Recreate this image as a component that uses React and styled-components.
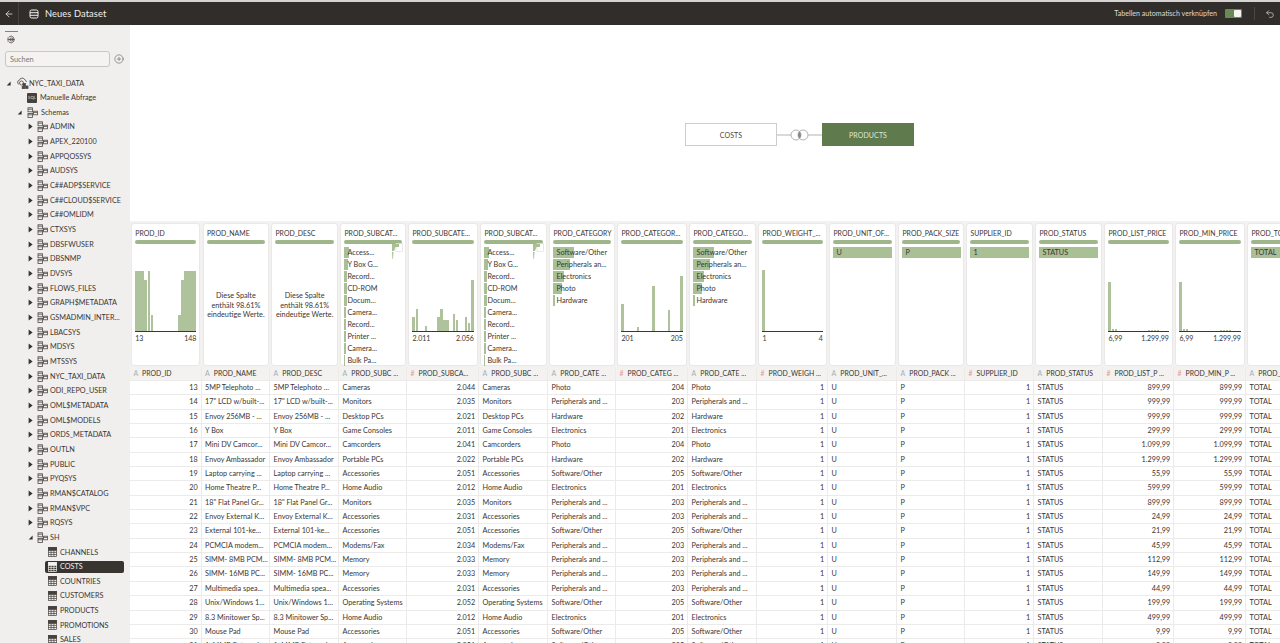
import React from 'react'
import styled, { createGlobalStyle } from 'styled-components'
import { ArrowLeft, CirclePlus, Undo2 } from 'lucide-react'

const COLS = '71.7px 68.5px 69px 68px 72px 69px 68px 72px 69px 71px 69px 68px 69px 69px 71px 72px 70px'
const FONT = `Lato, "Noto Sans", sans-serif`

const GlobalStyle = createGlobalStyle`
  html, body { margin: 0; padding: 0; height: 100%; background: #fff; }
  body { font-family: ${FONT}; color: #35322f; overflow: hidden; }
  * { box-sizing: border-box; }
`

const Page = styled.div`
  width: 1280px;
  height: 643px;
  display: flex;
  flex-direction: column;
  overflow: hidden;
`

const TopBar = styled.header`
  height: 25px;
  flex: none;
  background: #312d2a;
  border-top: 2px solid #d6d4d2;
  display: flex;
  align-items: center;
  color: #f2f0ee;
`

const BackButton = styled.div`
  width: 19px;
  height: 100%;
  display: flex;
  align-items: center;
  justify-content: center;
  border-right: 1px solid #45413d;
`

const Title = styled.div`
  display: flex;
  align-items: center;
  gap: 6px;
  margin-left: 10px;
  font-size: 9.3px;
  letter-spacing: .1px;
`

const TopRight = styled.div`
  margin-left: auto;
  display: flex;
  align-items: center;
  font-size: 7.1px;
  color: #dedbd8;
`

const Toggle = styled.div`
  width: 17px;
  height: 9px;
  margin-left: 8px;
  background: #6a8a55;
  border-radius: 1px;
  display: flex;
  justify-content: flex-end;
  padding: 1px;
  &::after {
    content: '';
    width: 7px;
    background: #f4f6ef;
    border-radius: 1px;
  }
`

const UndoButton = styled.div`
  width: 26px;
  margin-left: 12px;
  height: 13px;
  border-left: 1px solid #4b4743;
  display: flex;
  align-items: center;
  justify-content: flex-end;
  padding-right: 5px;
`

const Body = styled.div`
  flex: 1;
  min-height: 0;
  display: flex;
`

const Sidebar = styled.aside`
  width: 130px;
  flex: none;
  background: #f1efed;
  overflow: hidden;
  padding: 6px 0 0 5px;
`

const SideTab = styled.div`
  width: 13px;
  height: 16px;
  border-top: 1px solid #7d8a70;
  display: flex;
  align-items: center;
  justify-content: center;
  color: #45413d;
`

const SearchRow = styled.div`
  display: flex;
  align-items: center;
  gap: 4px;
  margin-top: 4px;
  color: #45413d;
`

const SearchBox = styled.div`
  width: 105px;
  height: 16px;
  border: 1px solid #c9c7c4;
  border-radius: 3px;
  background: #f4f3f1;
  font-size: 7.4px;
  color: #7b7773;
  padding-left: 4px;
  display: flex;
  align-items: center;
`

const Tree = styled.ul`
  list-style: none;
  margin: 8.7px 0 0 -5px;
  padding: 0;
`

const TreeRow = styled.li`
  height: 14.67px;
  display: flex;
  align-items: center;
  padding-left: ${p => p.$left}px;
  font-size: 7.25px;
  color: #3a3633;
  white-space: nowrap;
`

const Caret = styled.span`
  width: ${p => p.$wide}px;
  flex: none;
  display: flex;
`

const TreeLabel = styled.span`
  margin-left: ${p => p.$gap}px;
`

const SqlBadge = styled.span`
  width: 10px;
  height: 10px;
  flex: none;
  background: #45413d;
  color: #e2e0dd;
  border-radius: 1px;
  font-size: 4.2px;
  line-height: 10px;
  text-align: center;
`

const Selected = styled.div`
  width: 79px;
  height: 12px;
  margin-left: -3px;
  padding-left: 3px;
  display: flex;
  align-items: center;
  border-radius: 2px;
  background: ${p => (p.$on ? '#38342f' : 'transparent')};
  color: ${p => (p.$on ? '#f4f2f0' : '#3a3633')};
`

const Main = styled.main`
  flex: 1;
  min-width: 0;
  overflow: hidden;
  display: flex;
  flex-direction: column;
`

const JoinArea = styled.section`
  height: 196px;
  flex: none;
  padding: 98px 0 0 555px;
  display: flex;
  align-items: flex-start;
`

const JoinBox = styled.div`
  width: 92px;
  height: 23px;
  display: flex;
  align-items: center;
  justify-content: center;
  font-size: 7px;
  letter-spacing: .1px;
  border: 1px solid ${p => (p.$active ? '#5f7a4d' : '#cfcdca')};
  background: ${p => (p.$active ? '#5f7a4d' : '#fff')};
  color: ${p => (p.$active ? '#dfe6d8' : '#4b4743')};
`

const JoinLink = styled.div`
  width: 45px;
  height: 23px;
  display: flex;
  align-items: center;
`

const ProfileGrid = styled.section`
  display: grid;
  grid-template-columns: ${COLS};
  width: 1150px;
  height: 146px;
  flex: none;
  padding-top: 3px;
  background: #f3f2f0;
`

const Card = styled.div`
  height: 141px;
  margin: 0 2.3px;
  padding: 0 3px;
  background: #fff;
  border-radius: 2px;
  box-shadow: 0 0 2px rgba(0, 0, 0, .14);
  display: flex;
  flex-direction: column;
  position: relative;
  min-width: 0;
`

const CardTitle = styled.div`
  font-size: 6.9px;
  margin-top: 5px;
  height: 9px;
  line-height: 9px;
  white-space: nowrap;
  color: #3a3633;
`

const Pill = styled.div`
  height: 4px;
  margin-top: 2px;
  border-radius: 2px;
  background: #9eb68a;
  flex: none;
`

const Note = styled.div`
  margin-top: 47px;
  font-size: 7.3px;
  line-height: 9.6px;
  text-align: center;
  color: #3a3633;
`

const Chart = styled.div`
  height: 88px;
  display: flex;
  align-items: flex-end;
  border-bottom: 1px solid #3a3633;
  flex: none;
`

const Bin = styled.div`
  flex: 1;
  background: #aec39b;
  margin-right: .5px;
`

const AxisLabels = styled.div`
  display: flex;
  justify-content: space-between;
  font-size: 7px;
  margin-top: 2px;
  color: #3a3633;
`

const List = styled.div`
  margin-top: 3px;
  display: flex;
  flex-direction: column;
  gap: 1px;
`

const ListItem = styled.div`
  height: 11px;
  line-height: 11.6px;
  font-size: 7.25px;
  padding-left: 3px;
  white-space: nowrap;
  position: relative;
  color: #3a3633;
`

const ListBar = styled.span`
  position: absolute;
  left: 0;
  top: 0;
  bottom: 0;
  background: #a9c095;
`

const ListText = styled.span`
  position: relative;
`

const Minimap = styled.svg`
  position: absolute;
  right: 2px;
  top: 19px;
`

const DataTable = styled.section`
  width: 1150px;
`

const Row = styled.div`
  display: grid;
  grid-template-columns: ${COLS};
  height: ${p => (p.$head ? '14px' : '14.35px')};
  background: ${p => (p.$head ? '#f3f2f0' : '#fff')};
  border-bottom: 1px solid #ecebe9;
`

const Cell = styled.div`
  font-size: ${p => (p.$head ? '6.9px' : '7.25px')};
  line-height: 13.4px;
  padding: 0 ${p => (p.$num ? '3px' : '0')} 0 3.4px;
  text-align: ${p => (p.$num ? 'right' : 'left')};
  white-space: nowrap;
  overflow: hidden;
  border-right: 1px solid #ecebe9;
  color: #3a3633;
`

const TypeMark = styled.span`
  color: ${p => (p.$num ? '#dc9a8e' : '#9eb0bb')};
  margin-right: 4px;
`

const DbIcon = () => (
  <svg width="10" height="10" viewBox="0 0 10 10" fill="none" stroke="#f2f0ee" strokeWidth="1">
    <rect x="1" y="1" width="8" height="8" rx="1.6" />
    <path d="M1 3.7h8M1 6.3h8" />
  </svg>
)

const SourceIcon = () => (
  <svg width="9" height="9" viewBox="0 0 9 9" fill="none" stroke="#45413d" strokeWidth=".8">
    <path d="M2.200 1.700a3.300 3.300 0 1 1 0 5.600" />
    <circle cx="4.500" cy="4.500" r="1.500" />
    <path d="M.3 4.500h6.700M.3 3h2M.3 6h2" />
  </svg>
)

const ConnIcon = () => (
  <svg width="13" height="12" viewBox="0 0 13 12" fill="none" stroke="#4b4743" strokeWidth=".8">
    <path d="M3 7.200a2 2 0 0 1 .3-3.900A3 3 0 0 1 9 3a2 2 0 0 1 1.400 2" />
    <circle cx="5.500" cy="6" r="2" />
    <rect x="7" y="6.500" width="2.400" height="2.400" fill="#4b4743" />
    <rect x="9.600" y="9" width="2.400" height="2.400" fill="#4b4743" />
    <rect x="6.200" y="9.400" width="2.400" height="2.400" fill="#4b4743" />
  </svg>
)

const SchemaIcon = () => (
  <svg width="11" height="11" viewBox="0 0 11 11" fill="none" stroke="#4b4743" strokeWidth=".8">
    <rect x="1" y=".8" width="4.400" height="4" />
    <rect x="1" y="6.400" width="4.400" height="4" />
    <rect x="6.600" y="4.200" width="3.800" height="3.600" />
    <path d="M1 2.200h4.400M1 7.800h4.400M6.600 5.400h3.800M5.400 6h1.200" />
  </svg>
)

const TableIcon = ({ light }) => {
  const c = light ? '#f4f2f0' : '#45413d'
  return (
    <svg width="9" height="10" viewBox="0 0 9 10" fill="none" stroke={c} strokeWidth=".7">
      <rect x=".4" y=".4" width="8.200" height="9.200" />
      <rect x=".4" y=".4" width="8.200" height="3" fill={c} />
      <path d="M3.100 3.400v6.200M5.900 3.400v6.200M.4 5.400h8.200M.4 7.500h8.200" />
    </svg>
  )
}

const Open = () => (
  <svg width="5" height="5" viewBox="0 0 5 5"><path d="M4.600.6v3.900H.7z" fill="#35322f" /></svg>
)

const Closed = () => (
  <svg width="5" height="7" viewBox="0 0 5 7"><path d="M.6.4 4.600 3.500.6 6.600z" fill="#35322f" /></svg>
)

const schemas = ['ADMIN', 'APEX_220100', 'APPQOSSYS', 'AUDSYS', 'C##ADP$SERVICE', 'C##CLOUD$SERVICE', 'C##OMLIDM', 'CTXSYS', 'DBSFWUSER', 'DBSNMP', 'DVSYS', 'FLOWS_FILES', 'GRAPH$METADATA', 'GSMADMIN_INTER...', 'LBACSYS', 'MDSYS', 'MTSSYS', 'NYC_TAXI_DATA', 'ODI_REPO_USER', 'OML$METADATA', 'OML$MODELS', 'ORDS_METADATA', 'OUTLN', 'PUBLIC', 'PYQSYS', 'RMAN$CATALOG', 'RMAN$VPC', 'RQSYS']
const tables = ['CHANNELS', 'COSTS', 'COUNTRIES', 'CUSTOMERS', 'PRODUCTS', 'PROMOTIONS', 'SALES']

const subcats = [['Access...', 4.5], ['Y Box G...', 3.5], ['Record...', 3], ['CD-ROM', 2.5], ['Docum...', 2.5], ['Camera...', 2], ['Record...', 2], ['Printer ...', 1.5], ['Camera...', 1.5], ['Bulk Pa...', 1]]
const cats = [['Software/Other', 21], ['Peripherals an...', 17], ['Electronics', 10.5], ['Photo', 8.5], ['Hardware', 1.5]]

const bins = (pairs) => Array.from({ length: 20 }, (_, i) => pairs[i] || 0)

const priceBins = bins({ 0: 49, 1: 2, 2: 2, 13: .6, 14: .6, 15: .8, 16: .8 })

const cards = [
  { title: 'PROD_ID', hist: [60, 60, 60, 51, 60, 16, 0, 0, 0, 0, 0, 0, 0, 0, 16, 51, 60, 60, 60, 60], axis: ['13', '148'] },
  { title: 'PROD_NAME', note: true },
  { title: 'PROD_DESC', note: true },
  { title: 'PROD_SUBCAT...', list: subcats, mini: true },
  { title: 'PROD_SUBCATE...', hist: bins({ 0: 14, 1: 22, 4: 5, 8: 14, 9: 22, 10: 11, 11: 11, 13: 17, 14: 11, 17: 14, 18: 8, 19: 51 }), axis: ['2.011', '2.056'] },
  { title: 'PROD_SUBCAT...', list: subcats, mini: true },
  { title: 'PROD_CATEGORY', list: cats },
  { title: 'PROD_CATEGOR...', hist: bins({ 0: 27, 5: 4, 10: 45, 15: 21, 19: 55 }), axis: ['201', '205'] },
  { title: 'PROD_CATEGO...', list: cats },
  { title: 'PROD_WEIGHT_...', hist: bins({ 0: 61 }), axis: ['1', '4'] },
  { title: 'PROD_UNIT_OF...', list: [['U', 59]] },
  { title: 'PROD_PACK_SIZE', list: [['P', 59]] },
  { title: 'SUPPLIER_ID', list: [['1', 59]] },
  { title: 'PROD_STATUS', list: [['STATUS', 59]] },
  { title: 'PROD_LIST_PRICE', hist: priceBins, axis: ['6,99', '1.299,99'] },
  { title: 'PROD_MIN_PRICE', hist: priceBins, axis: ['6,99', '1.299,99'] },
  { title: 'PROD_TOTAL', list: [['TOTAL', 59]] },
]

const heads = [['A', 'PROD_ID'], ['A', 'PROD_NAME'], ['A', 'PROD_DESC'], ['A', 'PROD_SUBC ...'], ['#', 'PROD_SUBCA...'], ['A', 'PROD_SUBC ...'], ['A', 'PROD_CATE ...'], ['#', 'PROD_CATEG ...'], ['A', 'PROD_CATE ...'], ['#', 'PROD_WEIGH ...'], ['A', 'PROD_UNIT_...'], ['A', 'PROD_PACK ...'], ['#', 'SUPPLIER_ID'], ['A', 'PROD_STATUS'], ['#', 'PROD_LIST_P ...'], ['#', 'PROD_MIN_P ...'], ['A', 'PROD_T...']]

const PERI = 'Peripherals and ...'
const rows = [
  [13, '5MP Telephoto ...', 'Cameras', '2.044', 'Photo', 204, '899,99'],
  [14, '17" LCD w/built-...', 'Monitors', '2.035', PERI, 203, '999,99'],
  [15, 'Envoy 256MB - ...', 'Desktop PCs', '2.021', 'Hardware', 202, '999,99'],
  [16, 'Y Box', 'Game Consoles', '2.011', 'Electronics', 201, '299,99'],
  [17, 'Mini DV Camcor...', 'Camcorders', '2.041', 'Photo', 204, '1.099,99'],
  [18, 'Envoy Ambassador', 'Portable PCs', '2.022', 'Hardware', 202, '1.299,99'],
  [19, 'Laptop carrying ...', 'Accessories', '2.051', 'Software/Other', 205, '55,99'],
  [20, 'Home Theatre P...', 'Home Audio', '2.012', 'Electronics', 201, '599,99'],
  [21, '18" Flat Panel Gr...', 'Monitors', '2.035', PERI, 203, '899,99'],
  [22, 'Envoy External K...', 'Accessories', '2.031', PERI, 203, '24,99'],
  [23, 'External 101-ke...', 'Accessories', '2.051', 'Software/Other', 205, '21,99'],
  [24, 'PCMCIA modem...', 'Modems/Fax', '2.034', PERI, 203, '45,99'],
  [25, 'SIMM- 8MB PCM...', 'Memory', '2.033', PERI, 203, '112,99'],
  [26, 'SIMM- 16MB PC...', 'Memory', '2.033', PERI, 203, '149,99'],
  [27, 'Multimedia spea...', 'Accessories', '2.031', PERI, 203, '44,99'],
  [28, 'Unix/Windows 1...', 'Operating Systems', '2.052', 'Software/Other', 205, '199,99'],
  [29, '8.3 Minitower Sp...', 'Home Audio', '2.012', 'Electronics', 201, '499,99'],
  [30, 'Mouse Pad', 'Accessories', '2.051', 'Software/Other', 205, '9,99'],
  [31, '1.44MB External ...', 'Accessories', '2.051', 'Software/Other', 205, '8,99'],
]

const Profile = ({ card }) => (
  <Card>
    <CardTitle>{card.title}</CardTitle>
    <Pill />
    {card.note && <Note>Diese Spalte enthält 98.61% eindeutige Werte.</Note>}
    {card.hist && (
      <>
        <Chart>
          {card.hist.map((h, i) => <Bin key={i} style={{ height: h }} />)}
        </Chart>
        <AxisLabels><span>{card.axis[0]}</span><span>{card.axis[1]}</span></AxisLabels>
      </>
    )}
    {card.list && (
      <List>
        {card.list.map(([label, w], i) => (
          <ListItem key={i}>
            <ListBar style={{ width: w }} />
            <ListText>{label}</ListText>
          </ListItem>
        ))}
      </List>
    )}
    {card.mini && (
      <Minimap width="11" height="18" viewBox="0 0 11 18">
        <rect x="4" y=".5" width="6.500" height="8" fill="#fff" stroke="#dddbd8" strokeWidth=".6" />
        <path d="M0 1h7v3H3.500L2 8H0zM0 9h1.500L1 16H.4z" fill="#a9c095" />
      </Minimap>
    )}
  </Card>
)

const TableRow = ({ row }) => {
  const [id, name, sub, subId, cat, catId, price] = row
  return (
    <Row>
      <Cell $num>{id}</Cell>
      <Cell>{name}</Cell>
      <Cell>{name}</Cell>
      <Cell>{sub}</Cell>
      <Cell $num>{subId}</Cell>
      <Cell>{sub}</Cell>
      <Cell>{cat}</Cell>
      <Cell $num>{catId}</Cell>
      <Cell>{cat}</Cell>
      <Cell $num>1</Cell>
      <Cell>U</Cell>
      <Cell>P</Cell>
      <Cell $num>1</Cell>
      <Cell>STATUS</Cell>
      <Cell $num>{price}</Cell>
      <Cell $num>{price}</Cell>
      <Cell>TOTAL</Cell>
    </Row>
  )
}

export default function App() {
  return (
    <Page>
      <GlobalStyle />
      <TopBar>
        <BackButton><ArrowLeft size={10} strokeWidth={1.8} /></BackButton>
        <Title><DbIcon /> Neues Dataset</Title>
        <TopRight>
          Tabellen automatisch verknüpfen
          <Toggle />
          <UndoButton><Undo2 size={10} strokeWidth={1.6} /></UndoButton>
        </TopRight>
      </TopBar>
      <Body>
        <Sidebar>
          <SideTab><SourceIcon /></SideTab>
          <SearchRow>
            <SearchBox>Suchen</SearchBox>
            <CirclePlus size={10} strokeWidth={1.2} />
          </SearchRow>
          <Tree>
            <TreeRow $left={6}>
              <Caret $wide={10}><Open /></Caret><ConnIcon /><TreeLabel $gap={0}>NYC_TAXI_DATA</TreeLabel>
            </TreeRow>
            <TreeRow $left={27}>
              <SqlBadge>SQL</SqlBadge><TreeLabel $gap={3}>Manuelle Abfrage</TreeLabel>
            </TreeRow>
            <TreeRow $left={17}>
              <Caret $wide={10}><Open /></Caret><SchemaIcon /><TreeLabel $gap={3}>Schemas</TreeLabel>
            </TreeRow>
            {schemas.map((s, i) => (
              <TreeRow key={i} $left={28}>
                <Caret $wide={9}><Closed /></Caret><SchemaIcon /><TreeLabel $gap={2}>{s}</TreeLabel>
              </TreeRow>
            ))}
            <TreeRow $left={28}>
              <Caret $wide={9}><Open /></Caret><SchemaIcon /><TreeLabel $gap={2}>SH</TreeLabel>
            </TreeRow>
            {tables.map(t => (
              <TreeRow key={t} $left={48}>
                <Selected $on={t === 'COSTS'}>
                  <TableIcon light={t === 'COSTS'} /><TreeLabel $gap={3}>{t}</TreeLabel>
                </Selected>
              </TreeRow>
            ))}
          </Tree>
        </Sidebar>
        <Main>
          <JoinArea>
            <JoinBox>COSTS</JoinBox>
            <JoinLink>
              <svg width="45" height="14" viewBox="0 0 45 14" fill="none" stroke="#b5b3b0">
                <path d="M0 7h14M31 7h14" />
                <circle cx="19" cy="7" r="5" />
                <circle cx="26" cy="7" r="5" />
                <path d="M22.500 3.400a5 5 0 0 1 0 7.200 5 5 0 0 1 0-7.200z" fill="#8a8886" stroke="none" />
              </svg>
            </JoinLink>
            <JoinBox $active>PRODUCTS</JoinBox>
          </JoinArea>
          <ProfileGrid>
            {cards.map((c, i) => <Profile key={i} card={c} />)}
          </ProfileGrid>
          <DataTable>
            <Row $head>
              {heads.map(([mark, label], i) => (
                <Cell key={i} $head><TypeMark $num={mark === '#'}>{mark}</TypeMark>{label}</Cell>
              ))}
            </Row>
            {rows.map(r => <TableRow key={r[0]} row={r} />)}
          </DataTable>
        </Main>
      </Body>
    </Page>
  )
}
